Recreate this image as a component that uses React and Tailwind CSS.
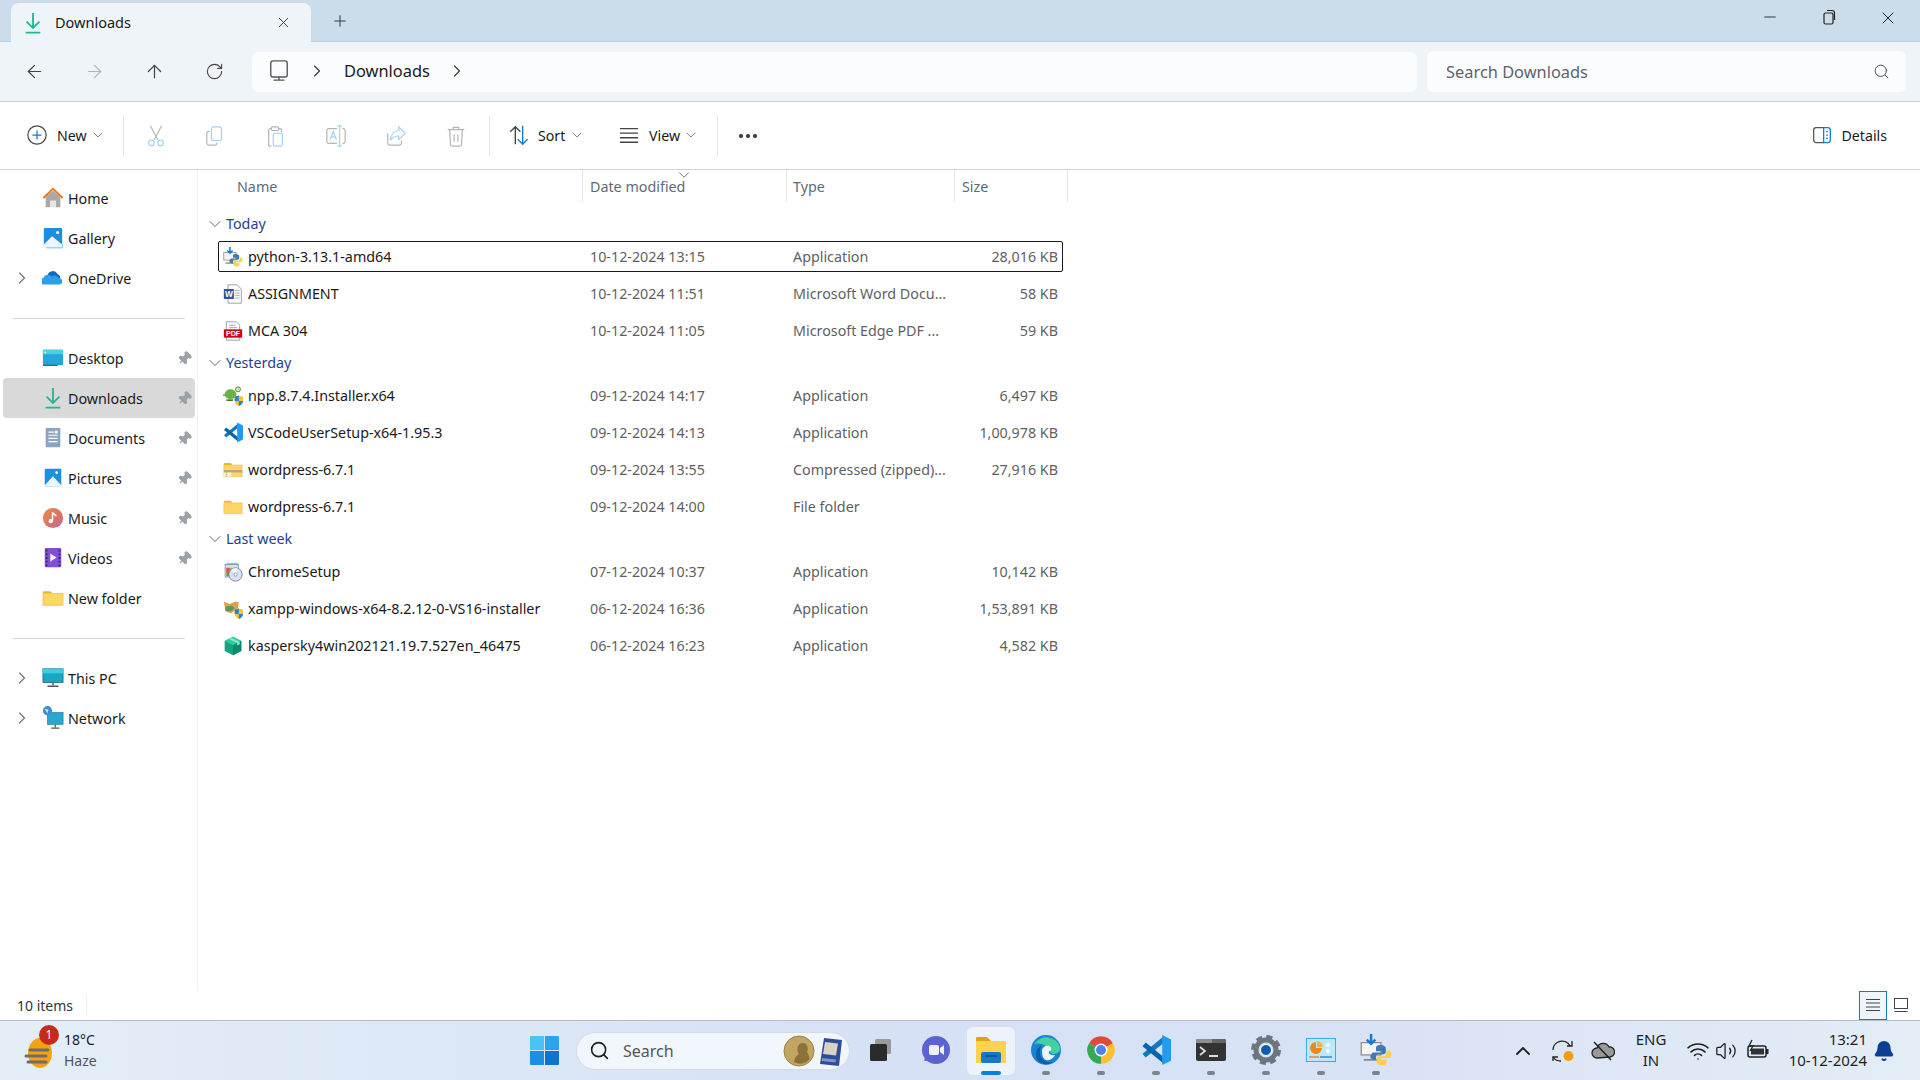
import { ArrowLeft, ArrowRight, ArrowUp, RotateCw, ChevronRight, ChevronDown, ChevronUp, Search, X, Plus, Minus, Pin, Wifi, Volume2, Bell } from 'lucide-react';

const Folder = ({ size = 20 }) => (
  <svg width={size} height={size} viewBox="0 0 24 24">
    <path d="M1 5.500a1 1 0 0 1 1-1h7l2.500 2.500H1z" fill="#f0b429" />
    <path d="M1 7h22v13H1z" fill="#fcd766" stroke="#e8b23c" strokeWidth="0.6" />
  </svg>
);

const ZipFolder = () => (
  <svg width="20" height="20" viewBox="0 0 24 24">
    <path d="M1 4.500a1 1 0 0 1 1-1h7l2.500 2.500H1z" fill="#f0b429" />
    <path d="M1 6h22v14H1z" fill="#fcd766" stroke="#e8b23c" strokeWidth="0.6" />
    <path d="M1 12h22v3H1z" fill="#b9a778" />
    <path d="M1 15h9v5H1z" fill="#f5f0e0" />
    <path d="M4 15v5" stroke="#999" strokeWidth="1.5" strokeDasharray="1 1" />
  </svg>
);

const Download = ({ size = 20 }) => (
  <svg width={size} height={size} viewBox="0 0 24 24" fill="none" stroke="#1fb896" strokeWidth="2">
    <path d="M12 1v16M5 10.500l7 7 7-7M4 22.500h16" />
  </svg>
);

const Home = () => (
  <svg width="22" height="22" viewBox="0 0 24 24">
    <path d="M4 11l8-7 8 7v11h-5v-7H9v7H4z" fill="#a9a9a9" />
    <path d="M9 22v-7h6v7z" fill="#e6e6e6" />
    <path d="M1.500 12L12 2l10.500 10" fill="none" stroke="#e8791d" strokeWidth="2.200" />
  </svg>
);

const Gallery = () => (
  <svg width="22" height="22" viewBox="0 0 24 24">
    <rect x="2" y="1" width="20" height="21" rx="1.500" fill="#1b8fe2" />
    <path d="M2 19l9-9 11 9v2a1 1 0 0 1-1 1H3a1 1 0 0 1-1-1z" fill="#eef6fd" />
    <circle cx="17" cy="6" r="1.700" fill="#fff" />
    <path d="M5 22.800h17.500V19" fill="none" stroke="#7cbcec" strokeWidth="1" />
  </svg>
);

const OneDrive = () => (
  <svg width="22" height="22" viewBox="0 0 24 24">
    <path d="M6 9a6 6 0 0 1 11-1.500A5 5 0 0 1 20 12H6z" fill="#0f6cbd" />
    <path d="M2 19a3.500 3.500 0 0 1-.5-7 5.500 5.500 0 0 1 9.500-1.500 4.500 4.500 0 0 1 7 1.500 3.500 3.500 0 0 1 4 3.500 3.500 3.500 0 0 1-3.500 3.500z" fill="#2b9fea" />
  </svg>
);

const Desktop = () => (
  <svg width="22" height="22" viewBox="0 0 24 24">
    <rect x="1" y="3" width="22" height="17" rx="1" fill="#23a6d8" />
    <path d="M1 4a1 1 0 0 1 1-1h20a1 1 0 0 1 1 1v4H1z" fill="#46d1e6" />
    <path d="M1 20h16" stroke="#0a3c66" strokeWidth="1" />
    <circle cx="3.500" cy="6" r="1" fill="#fff" />
  </svg>
);

const Documents = () => (
  <svg width="22" height="22" viewBox="0 0 24 24">
    <rect x="4" y="1" width="16" height="21" rx="1" fill="#8ba4c2" />
    <path d="M7 5.500h6M7 9h10M7 12.500h10M7 16h10" stroke="#fff" strokeWidth="1.300" />
    <rect x="14" y="4" width="3" height="3" fill="#fff" />
  </svg>
);

const Pictures = () => (
  <svg width="22" height="22" viewBox="0 0 24 24">
    <rect x="3" y="2" width="18" height="19" rx="1" fill="#1b8fe2" />
    <path d="M3 20l9-10 9 10v1H3z" fill="#eef6fd" />
    <circle cx="16" cy="6" r="1.500" fill="#fff" />
  </svg>
);

const Music = () => (
  <svg width="22" height="22" viewBox="0 0 24 24">
    <defs>
      <linearGradient id="musicFill" x1="0" y1="0" x2="1" y2="1">
        <stop offset="0" stopColor="#ee8a3f" />
        <stop offset="1" stopColor="#c9628f" />
      </linearGradient>
    </defs>
    <circle cx="12" cy="12" r="11" fill="url(#musicFill)" />
    <path d="M11.500 6v9" stroke="#fff" strokeWidth="1.600" />
    <path d="M11.500 6c1 2 3 2 4 4" stroke="#fff" strokeWidth="1.600" fill="none" />
    <circle cx="9.500" cy="15.500" r="2.300" fill="#fff" />
  </svg>
);

const Videos = () => (
  <svg width="22" height="22" viewBox="0 0 24 24">
    <rect x="3" y="1" width="18" height="21" rx="1.500" fill="#7f4fd6" />
    <path d="M5 3v18M19 3v18" stroke="#3b1f7a" strokeWidth="2" strokeDasharray="2 2" />
    <path d="M9 7l7 4.500L9 16z" fill="#f3ecff" />
  </svg>
);

const ThisPc = () => (
  <svg width="22" height="22" viewBox="0 0 24 24">
    <rect x="1" y="2" width="22" height="15" fill="#1ca6c4" stroke="#0f6a86" strokeWidth="0.800" />
    <path d="M1 2h22v5H1z" fill="#38cfdc" />
    <path d="M12 17v3M6 21h12" stroke="#555" strokeWidth="1.500" />
  </svg>
);

const Network = () => (
  <svg width="22" height="24" viewBox="0 0 24 26">
    <rect x="6" y="7" width="17" height="13" fill="#27a8cf" stroke="#0f6a86" strokeWidth="0.600" />
    <path d="M14.500 20v3M10 24h9" stroke="#555" strokeWidth="1.400" />
    <circle cx="6" cy="5" r="5" fill="#3d8fd1" />
    <path d="M3 3l4 1-1 4z" fill="#cfe6f6" />
  </svg>
);

const PinIcon = () => <Pin size={15} className="rotate-45 fill-[#9aa1a7] text-[#9aa1a7]" />;

const PythonSnakes = ({ x = 8, y = 8, s = 1 }) => (
  <g transform={`translate(${x} ${y}) scale(${s})`}>
    <path d="M8 0C4 0 4 1.500 4 3v2h4.500v1H2C.500 6 0 7.500 0 9s.500 3 2 3h2V9.500C4 8 5 7.500 6 7.500h4c1 0 2-.700 2-2V3c0-1.500-1.500-3-4-3z" fill="#3c7bb2" />
    <path d="M8.500 16.500c4 0 4-1.500 4-3v-2H8v-1h6.500c1.500 0 2-1.500 2-3s-.500-3-2-3h-2V7c0 1.500-1 2-2 2h-4c-1 0-2 .700-2 2v2.500c0 1.500 1.500 3 4 3z" fill="#f8d24a" />
  </g>
);

const PythonSetup = ({ size = 20 }) => (
  <svg width={size} height={size} viewBox="0 0 26 26">
    <rect x="1" y="7" width="16" height="10" fill="#f4f4f4" stroke="#8a8a8a" strokeWidth="1" />
    <path d="M9 17v3M3 21h12" stroke="#8a8a8a" strokeWidth="1.400" />
    <path d="M9 0v7M5.500 4.500L9 8l3.500-3.500" fill="none" stroke="#1678d2" strokeWidth="2" />
    <PythonSnakes x={9} y={9} s={1} />
  </svg>
);

const WordDoc = () => (
  <svg width="20" height="20" viewBox="0 0 24 24">
    <path d="M6 1h11l5 5v17H6z" fill="#fff" stroke="#8f8f8f" strokeWidth="1" />
    <path d="M14 8h6M14 11h6M14 14h6M14 17h6" stroke="#9a9a9a" strokeWidth="1" />
    <rect x="1" y="6" width="12" height="12" fill="#2b579a" />
    <text x="7" y="15.500" textAnchor="middle" fontSize="10" fontWeight="700" fill="#fff" fontFamily="'Liberation Sans', sans-serif">W</text>
  </svg>
);

const PdfDoc = () => (
  <svg width="20" height="20" viewBox="0 0 24 24">
    <path d="M4 1h12l4 4v18H4z" fill="#fff" stroke="#8f8f8f" strokeWidth="1" />
    <path d="M7 5h8M7 8h10" stroke="#9a9a9a" strokeWidth="1" />
    <rect x="1" y="10" width="22" height="10" fill="#d0021b" />
    <text x="12" y="18" textAnchor="middle" fontSize="8.500" fontWeight="700" fill="#fff" fontFamily="'Liberation Sans', sans-serif">PDF</text>
  </svg>
);

const Shield = () => (
  <g>
    <path d="M14 13l5-1.500 5 1.500v5c0 3-2.500 5-5 6-2.500-1-5-3-5-6z" fill="#f7c62f" />
    <path d="M14 13l5-1.500V18h-5zM19 18h5c0 3-2.500 5-5 6z" fill="#2f7fd0" />
  </g>
);

const Npp = () => (
  <svg width="20" height="20" viewBox="0 0 24 24">
    <path d="M0 11h8" stroke="#8a6a4a" strokeWidth="1.500" />
    <ellipse cx="9" cy="10" rx="7" ry="6" fill="#6bb344" />
    <circle cx="18" cy="4" r="3" fill="#cfe3b9" stroke="#4b7c2d" strokeWidth="1" />
    <path d="M4 17h8" stroke="#4b7c2d" strokeWidth="2" />
    <Shield />
  </svg>
);

const VsCode = ({ size = 20 }) => (
  <svg width={size} height={size} viewBox="0 0 24 24" fill="none">
    <path d="M19 3L2.500 16.500" stroke="#0e78c4" strokeWidth="4" />
    <path d="M2.500 7.500L19 21" stroke="#0065a9" strokeWidth="4" />
    <path d="M17 0l7 3.500v17L17 24z" fill="#1f9cf0" />
  </svg>
);

const ChromeSetupIcon = () => (
  <svg width="20" height="20" viewBox="0 0 24 24">
    <path d="M4 1h14v3H4z" fill="#9fc3dd" />
    <rect x="2.500" y="3" width="16" height="15" fill="#cfe2f1" stroke="#7f93a6" strokeWidth="1" />
    <path d="M4 7h7v6H4z" fill="#e0a13a" />
    <path d="M4 13h7v4H4z" fill="#4fa64a" />
    <path d="M4 7h4v6H4z" fill="#d9534f" />
    <circle cx="15" cy="15" r="8" fill="#d6e2f3" stroke="#6f7e96" strokeWidth="1" />
    <path d="M15 15L9.500 10a8 8 0 0 1 8-2.500z" fill="#f2f6fb" />
    <circle cx="15" cy="15" r="2" fill="#fff" stroke="#6f7e96" strokeWidth="0.800" />
  </svg>
);

const Xampp = () => (
  <svg width="20" height="20" viewBox="0 0 24 24">
    <path d="M1 3l7 3 7-3 4 1-1 7-8 6-7-2z" fill="#d8a24a" />
    <path d="M3 9l8-1 3 3-5 4-6-1z" fill="#5a9a5c" />
    <Shield />
  </svg>
);

const Kaspersky = () => (
  <svg width="20" height="20" viewBox="0 0 24 24">
    <path d="M12 1l10 5v12l-10 5-10-5V6z" fill="#14a37f" />
    <path d="M2 6l10 5 10-5-10-5z" fill="#2ecb9f" />
    <path d="M12 11v12l10-5V6z" fill="#0e8a6b" />
    <path d="M7 3.500l10 5v3l3-1.500V7L10 2z" fill="#8ce5c4" />
  </svg>
);

const PcOutline = () => (
  <svg width="22" height="22" viewBox="0 0 24 24" fill="none" stroke="#555">
    <rect x="3" y="1" width="18" height="17.500" rx="2.500" strokeWidth="1.500" />
    <path d="M12 18.500v3M6 22h12" strokeWidth="1.500" />
  </svg>
);

const NewIcon = () => (
  <svg width="20" height="20" viewBox="0 0 24 24" fill="none">
    <circle cx="12" cy="12" r="11" stroke="#444" strokeWidth="1.400" />
    <path d="M12 6.500v11M6.500 12h11" stroke="#0f7bd0" strokeWidth="1.500" />
  </svg>
);

const CutIcon = () => (
  <svg width="22" height="22" viewBox="0 0 24 24" fill="none" strokeWidth="1.300">
    <path d="M6 1l8 15M18 1l-8 15" stroke="#b5b5b5" />
    <circle cx="7" cy="19.500" r="3" stroke="#a6d2f2" />
    <circle cx="17" cy="19.500" r="3" stroke="#a6d2f2" />
  </svg>
);

const CopyIcon = () => (
  <svg width="22" height="22" viewBox="0 0 24 24" fill="none" strokeWidth="1.300">
    <path d="M5 7H4a2 2 0 0 0-2 2v11a2 2 0 0 0 2 2h7a2 2 0 0 0 2-2v-1" stroke="#b5b5b5" />
    <rect x="7" y="2" width="11" height="15" rx="2.500" stroke="#a6d2f2" />
  </svg>
);

const PasteIcon = () => (
  <svg width="22" height="22" viewBox="0 0 24 24" fill="none" strokeWidth="1.300">
    <path d="M7 4H5.500a1.500 1.500 0 0 0-1.500 1.500V22a1 1 0 0 0 1 1h2M15 4h1.500A1.500 1.500 0 0 1 18 5.500V8" stroke="#b5b5b5" />
    <rect x="7" y="2" width="8" height="4" rx="1" stroke="#b5b5b5" />
    <rect x="9" y="9" width="10" height="14" rx="2" stroke="#a6d2f2" />
  </svg>
);

const RenameIcon = () => (
  <svg width="22" height="22" viewBox="0 0 24 24" fill="none" strokeWidth="1.300">
    <path d="M13 4H4a2 2 0 0 0-2 2v12a2 2 0 0 0 2 2h9M19 4h1a2 2 0 0 1 2 2v12a2 2 0 0 1-2 2h-1" stroke="#b5b5b5" />
    <path d="M16 1v22M13.500 1h5M13.500 23h5M5.500 16l3.500-9 3.500 9M6.800 13h4.400" stroke="#a6d2f2" />
  </svg>
);

const ShareIcon = () => (
  <svg width="22" height="22" viewBox="0 0 24 24" fill="none" strokeWidth="1.300">
    <path d="M3 9v11a2 2 0 0 0 2 2h11a2 2 0 0 0 2-2v-3" stroke="#b5b5b5" />
    <path d="M15 2l7 7-7 7v-4c-4 0-7 1-9 5 0-6 3-10 9-11z" stroke="#a6d2f2" />
  </svg>
);

const DeleteIcon = () => (
  <svg width="22" height="22" viewBox="0 0 24 24" fill="none" stroke="#b5b5b5" strokeWidth="1.300">
    <path d="M3 5h18M9 5V2.500h6V5M5 5l1 16a2 2 0 0 0 2 2h8a2 2 0 0 0 2-2l1-16M10 10v8M14 10v8" />
  </svg>
);

const SortIcon = () => (
  <svg width="22" height="22" viewBox="0 0 24 24" fill="none" strokeWidth="1.500">
    <path d="M8 22V3M2.500 8.500L8 3l5.500 5.500" stroke="#444" />
    <path d="M16 2v20M10.500 16.500L16 22l5.500-5.500" stroke="#0f7bd0" />
  </svg>
);

const ViewIcon = () => (
  <svg width="22" height="20" viewBox="0 0 24 22" fill="none" stroke="#444" strokeWidth="1.500">
    <path d="M2 4h20M2 9h20M2 14h20M2 19h20" />
  </svg>
);

const DetailsIcon = () => (
  <svg width="20" height="20" viewBox="0 0 24 24" fill="none">
    <path d="M14 3H5a3 3 0 0 0-3 3v12a3 3 0 0 0 3 3h9" stroke="#555" strokeWidth="1.500" />
    <path d="M14 3h5a3 3 0 0 1 3 3v12a3 3 0 0 1-3 3h-5z" stroke="#0f7bd0" strokeWidth="1.500" />
    <path d="M17 8h2M17 12h2M17 16h2" stroke="#0f7bd0" strokeWidth="1.500" />
  </svg>
);

const Chevron = () => <ChevronDown size={16} strokeWidth={1.2} className="-mx-[3px] text-[#666]" />;

const sideGroups = [
  [
    { name: 'Home', icon: <Home /> },
    { name: 'Gallery', icon: <Gallery /> },
    { name: 'OneDrive', icon: <OneDrive />, expand: true },
  ],
  [
    { name: 'Desktop', icon: <Desktop />, pin: true },
    { name: 'Downloads', icon: <Download size={22} />, pin: true, active: true },
    { name: 'Documents', icon: <Documents />, pin: true },
    { name: 'Pictures', icon: <Pictures />, pin: true },
    { name: 'Music', icon: <Music />, pin: true },
    { name: 'Videos', icon: <Videos />, pin: true },
    { name: 'New folder', icon: <Folder size={22} /> },
  ],
  [
    { name: 'This PC', icon: <ThisPc />, expand: true },
    { name: 'Network', icon: <Network />, expand: true },
  ],
];

const fileGroups = [
  {
    title: 'Today',
    files: [
      { name: 'python-3.13.1-amd64', date: '10-12-2024 13:15', type: 'Application', size: '28,016 KB', icon: <PythonSetup />, focused: true },
      { name: 'ASSIGNMENT', date: '10-12-2024 11:51', type: 'Microsoft Word Docu...', size: '58 KB', icon: <WordDoc /> },
      { name: 'MCA 304', date: '10-12-2024 11:05', type: 'Microsoft Edge PDF ...', size: '59 KB', icon: <PdfDoc /> },
    ],
  },
  {
    title: 'Yesterday',
    files: [
      { name: 'npp.8.7.4.Installer.x64', date: '09-12-2024 14:17', type: 'Application', size: '6,497 KB', icon: <Npp /> },
      { name: 'VSCodeUserSetup-x64-1.95.3', date: '09-12-2024 14:13', type: 'Application', size: '1,00,978 KB', icon: <VsCode size={21} /> },
      { name: 'wordpress-6.7.1', date: '09-12-2024 13:55', type: 'Compressed (zipped)...', size: '27,916 KB', icon: <ZipFolder /> },
      { name: 'wordpress-6.7.1', date: '09-12-2024 14:00', type: 'File folder', size: '', icon: <Folder /> },
    ],
  },
  {
    title: 'Last week',
    files: [
      { name: 'ChromeSetup', date: '07-12-2024 10:37', type: 'Application', size: '10,142 KB', icon: <ChromeSetupIcon /> },
      { name: 'xampp-windows-x64-8.2.12-0-VS16-installer', date: '06-12-2024 16:36', type: 'Application', size: '1,53,891 KB', icon: <Xampp /> },
      { name: 'kaspersky4win202121.19.7.527en_46475', date: '06-12-2024 16:23', type: 'Application', size: '4,582 KB', icon: <Kaspersky /> },
    ],
  },
];

const TaskIcon = ({ children, running, active }) => (
  <div className={`relative flex h-12 w-12 items-center justify-center rounded-md pb-px ${active ? 'bg-[#eef3fb]' : ''}`}>
    {children}
    {running && <span className="absolute bottom-0 left-[20px] h-1 w-2 rounded-full bg-[#7d828c]" />}
    {active && <span className="absolute bottom-0 left-[14px] h-1 w-5 rounded-full bg-[#0f7fd6]" />}
  </div>
);

const Taskbar = () => (
  <div className="flex h-[60px] items-center border-t border-[#b6bec6] bg-[linear-gradient(90deg,#e4eef7_0%,#d6e1f6_45%,#d8e2f5_70%,#e3edf6_100%)]">
    <div className="flex w-[520px] items-center">
      <div className="relative ml-[24px] h-9 w-9">
        <svg width="34" height="36" viewBox="0 0 34 36">
          <ellipse cx="16" cy="20" rx="12" ry="15" fill="#f5a20d" />
          <path d="M6 17h18M2 23h20M4 29h18" stroke="#6d6d6d" strokeWidth="3" strokeLinecap="round" />
        </svg>
        <span className="absolute left-[15px] top-[-8px] flex h-5 w-5 items-center justify-center rounded-full bg-[#c42b1c] text-[12px] text-white">1</span>
      </div>
      <div className="ml-[4px] pb-[2px] leading-[21px]">
        <div className="text-[14px] text-[#1b1b1b]">18°C</div>
        <div className="text-[14px] text-[#555]">Haze</div>
      </div>
    </div>

    <div className="flex h-12 w-12 items-center justify-center">
      <svg width="29" height="29" viewBox="0 0 29 29">
        <path d="M0 1a1 1 0 0 1 1-1h13v14H0z" fill="#47c3f5" />
        <path d="M15 0h13a1 1 0 0 1 1 1v13H15z" fill="#2aa5ec" />
        <path d="M0 15h14v14H1a1 1 0 0 1-1-1z" fill="#1c8fe0" />
        <path d="M15 15h14v13a1 1 0 0 1-1 1H15z" fill="#0f74cf" />
      </svg>
    </div>

    <div className="ml-2 flex h-[38px] w-[274px] items-center rounded-full border border-[#d4dbe6] bg-[#f1f5fc]">
      <Search size={21} strokeWidth={1.8} className="ml-[12px] text-[#1f1f1f]" />
      <span className="ml-[13px] text-[16px] text-[#555]">Search</span>
      <svg className="ml-auto mr-1" width="62" height="34" viewBox="0 0 62 34">
        <circle cx="16" cy="17" r="15" fill="#c2a563" />
        <circle cx="16" cy="17" r="15" fill="none" stroke="#9c8240" strokeWidth="1" />
        <path d="M11 28c1-5 2-6 5-8-3-3-2-11 4-11 4 0 6 5 4 9 2 3 3 6 2 8-4 4-10 5-15 2z" fill="#8b7238" />
        <path d="M37 30l4-26 18 2-3 26z" fill="#2d4d9a" />
        <path d="M42 8l13 1.500-2 12-13-1.500z" fill="#d8d2c4" />
        <path d="M39 24l14 1.500-.500 3-14-1.500z" fill="#7f95c8" />
      </svg>
    </div>

    <div className="ml-[7px] flex gap-[7px]">
      <TaskIcon>
        <svg width="28" height="28" viewBox="0 0 28 28">
          <rect x="8" y="3" width="16" height="15" rx="1.500" fill="#9a9a9a" />
          <rect x="3" y="8" width="17" height="17" rx="1.500" fill="#2b2b2b" />
        </svg>
      </TaskIcon>
      <TaskIcon>
        <svg width="30" height="30" viewBox="0 0 30 30">
          <circle cx="15" cy="15" r="14" fill="#5b63cf" />
          <path d="M3 26l2-6 5 5z" fill="#5b63cf" />
          <rect x="8" y="10" width="10" height="10" rx="2" fill="#eef0ff" />
          <path d="M19 13l4-3v10l-4-3z" fill="#eef0ff" />
        </svg>
      </TaskIcon>
      <TaskIcon active>
        <svg width="32" height="30" viewBox="0 0 32 30">
          <path d="M1 3a1 1 0 0 1 1-1h10l4 4H1z" fill="#e2a40c" />
          <path d="M1 6h30v22H1z" fill="#fdd24d" />
          <rect x="6" y="17" width="20" height="11" rx="2" fill="#1678c8" />
          <path d="M10 21h12" stroke="#0d4f8c" strokeWidth="1.500" />
        </svg>
      </TaskIcon>
      <TaskIcon running>
        <svg width="30" height="30" viewBox="0 0 30 30">
          <circle cx="15" cy="15" r="15" fill="#1684d4" />
          <path d="M3 10A14 14 0 0 1 29 12c1 5-3 7-7 7-2 0-3-1-3-3 0-6-14-10-16-6z" fill="#43cfa0" />
          <path d="M11 16c0-4 4-6 7-5 3 1 3 4 1 5-3 1 0 5 5 4-2 4-6 6-9 5-3-1-4-5-4-9z" fill="#eef3fb" />
          <path d="M5 22c-1-6 2-10 6-12-2 3-3 8-1 12 2 4 7 6 12 5-6 4-15 2-17-5z" fill="#0d5ea8" />
        </svg>
      </TaskIcon>
      <TaskIcon running>
        <svg width="30" height="30" viewBox="0 0 24 24">
          <path d="M12 12L2.470 6.500A11 11 0 0 1 21.530 6.500Z" fill="#e14a3b" />
          <path d="M12 12L21.530 6.500A11 11 0 0 1 12 23Z" fill="#fbc02d" />
          <path d="M12 12L12 23A11 11 0 0 1 2.470 6.500Z" fill="#34a853" />
          <circle cx="12" cy="12" r="5.200" fill="#fff" />
          <circle cx="12" cy="12" r="4" fill="#4a86ea" />
        </svg>
      </TaskIcon>
      <TaskIcon running>
        <VsCode size={30} />
      </TaskIcon>
      <TaskIcon running>
        <svg width="30" height="24" viewBox="0 0 30 24" fill="none">
          <rect width="30" height="22" y="1" rx="2" fill="#333" />
          <path d="M0 3a2 2 0 0 1 2-2h14v4H0z" fill="#8e8e8e" />
          <path d="M16 1h12a2 2 0 0 1 2 2v2H16z" fill="#666" />
          <path d="M4 9l5 4-5 4" stroke="#ddd" strokeWidth="1.800" />
          <path d="M13 18h9" stroke="#ddd" strokeWidth="2" />
        </svg>
      </TaskIcon>
      <TaskIcon running>
        <svg width="32" height="32" viewBox="0 0 32 32" fill="none">
          <circle cx="16" cy="16" r="13" stroke="#6d767f" strokeWidth="4" strokeDasharray="6 4.200" />
          <circle cx="16" cy="16" r="10" stroke="#6d767f" strokeWidth="5" />
          <circle cx="16" cy="16" r="5.500" fill="#0f5cae" stroke="#fff" strokeWidth="1" />
        </svg>
      </TaskIcon>
      <TaskIcon running>
        <svg width="30" height="24" viewBox="0 0 30 24">
          <rect x="0.500" y="0.500" width="29" height="23" fill="#bfe6f9" stroke="#35aeea" />
          <path d="M10 4a6 6 0 1 0 6 6h-6z" fill="#e98a1f" />
          <path d="M11 3a6 6 0 0 1 6 6h-6z" fill="#f2b24d" />
          <circle cx="22" cy="7" r="2" fill="#fff" />
          <circle cx="22" cy="13" r="2" fill="#fff" />
          <path d="M3 19h10" stroke="#e98a1f" strokeWidth="1.500" />
          <path d="M14 19h12" stroke="#2f8fd4" strokeWidth="1.500" />
        </svg>
      </TaskIcon>
      <TaskIcon running>
        <PythonSetup size={32} />
      </TaskIcon>
    </div>

    <div className="flex items-center text-[#1f1f1f]">
      <ChevronUp size={24} strokeWidth={1.8} className="ml-[111px]" />
      <svg className="ml-[17px]" width="24" height="24" viewBox="0 0 24 24" fill="none" stroke="#222" strokeWidth="1.300">
        <path d="M1 11a9 9 0 0 1 17-4M20 2v5h-5M6 18H1v4" />
        <path d="M1 18a9 9 0 0 0 8 4" />
        <circle cx="16.500" cy="17" r="5" fill="#f79a0e" stroke="none" />
      </svg>
      <svg className="ml-[15px]" width="24" height="24" viewBox="0 0 24 24" fill="none">
        <path d="M6 19a5 5 0 0 1 0-10 6.500 6.500 0 0 1 12-1 5 5 0 0 1 1 10z" fill="#999" stroke="#222" strokeWidth="1.300" />
        <path d="M3 3l17 18" stroke="#222" strokeWidth="1.500" />
      </svg>
      <div className="ml-[16px] w-10 pb-[2px] text-center text-[15px] leading-[21px]">
        <div>ENG</div>
        <div>IN</div>
      </div>
      <Wifi size={24} strokeWidth={1.6} className="ml-[15px]" />
      <Volume2 size={22} strokeWidth={1.4} className="ml-[5px]" />
      <svg className="ml-[9px]" width="24" height="24" viewBox="0 0 24 24" fill="none">
        <rect x="2" y="7" width="18" height="11" rx="2" stroke="#222" strokeWidth="1.500" />
        <rect x="5" y="9.500" width="13" height="6" fill="#333" />
        <path d="M20 10h2.500v5H20z" fill="#222" />
        <path d="M6 1L3 7h4l-3 5" stroke="#222" strokeWidth="1.300" />
      </svg>
      <div className="ml-[5px] w-[92px] pb-[2px] text-right text-[15px] leading-[21px]">
        <div>13:21</div>
        <div>10-12-2024</div>
      </div>
      <Bell size={22} className="ml-[6px] fill-[#0b3f94] text-[#0b3f94]" />
    </div>
  </div>
);

const App = () => {
  return (
    <div className="flex h-[1080px] w-[1920px] flex-col overflow-hidden bg-white font-['Noto_Sans',sans-serif] text-[#1a1a1a]">
      {/* Title bar and tab */}
      <div className="flex h-[42px] border-b border-[#b9ccdc] bg-[#cbddeb]">
        <div className="ml-[11px] mt-[3px] flex h-[39px] w-[300px] items-center rounded-t-lg bg-[#eff4f9] pl-[11px] pr-[19px]">
          <Download size={22} />
          <span className="ml-[11px] text-[14.500px]">Downloads</span>
          <X size={17} strokeWidth={1.3} className="ml-auto text-[#333]" />
        </div>
        <div className="ml-[20px] flex items-center">
          <Plus size={18} strokeWidth={1.3} className="text-[#333]" />
        </div>
        <div className="ml-auto flex items-start pt-[8px] text-[#222]">
          <Minus size={18} strokeWidth={1.2} />
          <svg className="ml-[41px]" width="18" height="18" viewBox="0 0 18 18" fill="none" stroke="#222" strokeWidth="1.200">
            <rect x="4" y="5" width="9" height="11" rx="1.500" />
            <path d="M7 2.500h5a2.500 2.500 0 0 1 2.500 2.500v7" />
          </svg>
          <X size={20} strokeWidth={1.2} className="ml-[40px] mr-[22px]" />
        </div>
      </div>

      {/* Navigation bar */}
      <div className="flex h-[60px] items-center border-b border-[#c5ced6] bg-[#eff4f9] pl-1 pr-[14px]">
        <div className="flex w-[60px] justify-center"><ArrowLeft size={21} strokeWidth={1.4} className="text-[#444]" /></div>
        <div className="flex w-[60px] justify-center"><ArrowRight size={21} strokeWidth={1.4} className="text-[#b5b5b5]" /></div>
        <div className="flex w-[60px] justify-center"><ArrowUp size={21} strokeWidth={1.4} className="text-[#444]" /></div>
        <div className="flex w-[60px] justify-center"><RotateCw size={19} strokeWidth={1.4} className="text-[#444]" /></div>
        <div className="ml-2 flex h-10 flex-1 items-center rounded-md bg-[#fbfcfe] pb-px pl-[16px]">
          <PcOutline />
          <ChevronRight size={20} strokeWidth={1.3} className="ml-[17px] text-[#333]" />
          <span className="ml-[17px] pt-px text-[16.400px]">Downloads</span>
          <ChevronRight size={20} strokeWidth={1.3} className="ml-[17px] text-[#333]" />
        </div>
        <div className="ml-[10px] flex h-[41px] w-[479px] items-center justify-between rounded-md bg-[#fbfcfe] pl-[19px] pr-[16px]">
          <span className="pt-px text-[16.400px] text-[#5f6368]">Search Downloads</span>
          <Search size={17} strokeWidth={1.3} className="text-[#444]" />
        </div>
      </div>

      {/* Command bar */}
      <div className="flex h-[68px] items-center border-b border-[#d0d4d8] text-[14.200px]">
        <div className="flex w-[123px] items-center pl-[27px]">
          <NewIcon />
          <span className="ml-[10px] w-[36px] pt-px">New</span>
          <Chevron />
        </div>
        <div className="h-10 w-px bg-[#e6e6e6]" />
        <div className="ml-[2px] flex">
          {[<CutIcon key="cut" />, <CopyIcon key="copy" />, <PasteIcon key="paste" />, <RenameIcon key="rename" />, <ShareIcon key="share" />, <DeleteIcon key="delete" />].map((icon, i) => (
            <div key={i} className="flex w-[60px] justify-center">{icon}</div>
          ))}
        </div>
        <div className="ml-[3px] h-10 w-px bg-[#e6e6e6]" />
        <div className="flex w-[100px] items-center pl-[18px]">
          <SortIcon />
          <span className="ml-[8px] w-[34px] pt-px">Sort</span>
          <Chevron />
        </div>
        <div className="flex w-[127px] items-center pl-[28px]">
          <ViewIcon />
          <span className="ml-[9px] w-[37px] pt-px">View</span>
          <Chevron />
        </div>
        <div className="h-10 w-px bg-[#e6e6e6]" />
        <div className="flex w-[60px] justify-center gap-[3px]">
          <span className="h-1 w-1 rounded-full bg-[#333]" />
          <span className="h-1 w-1 rounded-full bg-[#333]" />
          <span className="h-1 w-1 rounded-full bg-[#333]" />
        </div>
        <div className="ml-auto flex items-center pr-[33px]">
          <DetailsIcon />
          <span className="ml-[9px] pt-px">Details</span>
        </div>
      </div>

      {/* Sidebar and file list */}
      <div className="flex min-h-0 flex-1">
        <div className="w-[198px] border-r border-[#f0f0f0] pl-[3px] pt-2 text-[14.300px]">
          {sideGroups.map((group, g) => (
            <div key={g}>
              {g > 0 && <div className="my-[19.500px] ml-[10px] h-px w-[172px] bg-[#d6d6d6]" />}
              {group.map((item) => (
                <div key={item.name} className={`flex h-10 w-[192px] items-center rounded pr-[3px] ${item.active ? 'bg-[#d9d9d9]' : ''}`}>
                  <div className="flex w-[38px] justify-center">
                    {item.expand && <ChevronRight size={20} strokeWidth={1.5} className="text-[#777]" />}
                  </div>
                  <div className="flex w-6 justify-center">{item.icon}</div>
                  <span className="ml-[3px] pt-[2px]">{item.name}</span>
                  {item.pin && <div className="ml-auto"><PinIcon /></div>}
                </div>
              ))}
            </div>
          ))}
        </div>

        <div className="flex-1 text-[14.300px]">
          <div className="relative flex h-8 w-[870px] items-center text-[#5d6b78]">
            <ChevronDown size={18} strokeWidth={1.2} className="absolute left-[477px] top-[-4px] text-[#666]" />
            <div className="flex h-8 w-[385px] items-center border-r border-[#e5e5e5] pl-[39px] pt-[2px]">Name</div>
            <div className="flex h-8 w-[204px] items-center border-r border-[#e5e5e5] pl-[7px] pt-[2px]">Date modified</div>
            <div className="flex h-8 w-[168px] items-center border-r border-[#e5e5e5] pl-[6px] pt-[2px]">Type</div>
            <div className="flex h-8 w-[113px] items-center border-r border-[#e5e5e5] pl-[7px] pt-[2px]">Size</div>
          </div>

          <div className="pt-2">
            {fileGroups.map((group) => (
              <div key={group.title}>
                <div className="flex h-7 items-center pb-px pl-[10px] text-[#1d3f94]">
                  <ChevronDown size={20} strokeWidth={1.2} className="-mx-[3px] text-[#666]" />
                  <span className="ml-1">{group.title}</span>
                </div>
                {group.files.map((file) => (
                  <div key={file.name + file.date} className="ml-[20px] flex h-[37px] w-[845px] items-center">
                    <div className={`flex h-[31px] w-full items-center rounded-[2px] border ${file.focused ? 'border-[#1a1a1a]' : 'border-transparent'}`}>
                      <div className="ml-[4px] flex w-5 shrink-0 justify-center">{file.icon}</div>
                      <span className="ml-[5px] w-[342px] shrink-0 whitespace-nowrap">{file.name}</span>
                      <span className="w-[203px] shrink-0 text-[#5f5f5f]">{file.date}</span>
                      <span className="w-[169px] shrink-0 text-[#5f5f5f]">{file.type}</span>
                      <span className="w-[96px] shrink-0 text-right text-[#5f5f5f]">{file.size}</span>
                    </div>
                  </div>
                ))}
              </div>
            ))}
          </div>
        </div>
      </div>

      {/* Status bar */}
      <div className="flex h-[30px] items-center text-[14px] text-[#333]">
        <span className="w-[86px] whitespace-nowrap pl-[17px]">10 items</span>
        <div className="h-5 w-px bg-[#eee]" />
        <div className="ml-auto flex items-center pr-[11px]">
          <div className="flex h-[29px] w-[28px] items-center justify-center border border-[#0f7bd0] bg-[#eef6fc]">
            <svg width="16" height="14" viewBox="0 0 16 14" fill="none" stroke="#444"><path d="M1 1.500h14M1 5h14M1 9h14M1 12.500h14" /></svg>
          </div>
          <svg className="ml-[6px]" width="16" height="16" viewBox="0 0 16 16" fill="none" stroke="#444"><rect x="1.500" y="1.500" width="13" height="10" /><path d="M1.500 14.500h13" /></svg>
        </div>
      </div>

      <Taskbar />
    </div>
  );
};

export default App;
